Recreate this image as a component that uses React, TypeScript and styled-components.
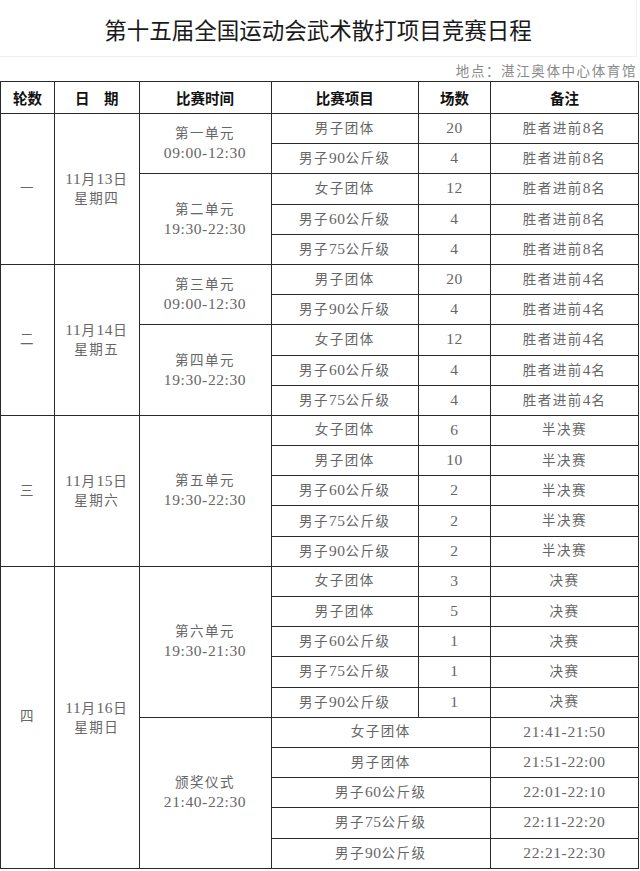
import React from "react";
import styled, { createGlobalStyle } from "styled-components";

const Global = createGlobalStyle`
  html, body { margin: 0; padding: 0; background: #fff; }
  body { width: 640px; }
`;

const Page = styled.div`
  width: 640px;
  background: #fff;
`;

const TitleBar = styled.div`
  height: 57px;
  display: flex;
  align-items: center;
  justify-content: center;
  border-bottom: 1px solid #f0f0f0;
  border-right: 1px solid #f0f0f0;
  box-sizing: border-box;
  width: 637px;
`;

const Title = styled.h1`
  margin: 0;
  padding-top: 2px;
  font-family: "Noto Sans CJK SC", "Noto Sans", sans-serif;
  font-weight: 400;
  font-size: 22.5px;
  color: #1a1a1a;
`;

const Venue = styled.div`
  height: 24px;
  display: flex;
  align-items: center;
  justify-content: flex-end;
  padding-right: 3px;
  padding-top: 2px;
  box-sizing: border-box;
  font-family: "Liberation Serif", "Noto Sans CJK SC", serif;
  font-size: 13.5px;
  letter-spacing: 1.6px;
  color: #8a8a8a;
`;

const Table = styled.table`
  width: 638px;
  border-collapse: collapse;
  table-layout: fixed;
  border: 1.5px solid #3a3a3a;
`;

const HeadRow = styled.tr`
  height: 32px;
`;

const Row = styled.tr`
  height: 30.2px;
`;

const Th = styled.th`
  border: 1.5px solid #2a2a2a;
  padding: 0;
  font-family: "Noto Sans CJK SC", sans-serif;
  font-weight: 700;
  font-size: 14.5px;
  color: #111;
  text-align: center;
  vertical-align: middle;
`;

const Td = styled.td<{ $block?: boolean }>`
  border: 1.5px solid #2a2a2a;
  padding: 0;
  font-family: "Liberation Serif", "Noto Sans CJK SC", serif;
  font-size: 13.5px;
  letter-spacing: 1.5px;
  line-height: ${(p) => (p.$block ? "19px" : "18px")};
  color: #666;
  text-align: center;
  vertical-align: middle;
  white-space: nowrap;
`;

const Num = styled.span`
  font-family: "Liberation Serif", serif;
  font-size: 15.5px;
  letter-spacing: 0.6px;
`;

function Txt({ children }: { children: string }) {
  const parts = children.split(/([0-9:\-]+)/).filter((p) => p.length > 0);
  return (
    <>
      {parts.map((p, i) =>
        /^[0-9:\-]+$/.test(p) ? <Num key={i}>{p}</Num> : <React.Fragment key={i}>{p}</React.Fragment>
      )}
    </>
  );
}

type Item = { name: string; count?: string; note: string };
type Session = { label: string; time: string; items: Item[]; merged?: boolean };
type Day = { round: string; date: string; weekday: string; sessions: Session[] };

const days: Day[] = [
  {
    round: "一",
    date: "11月13日",
    weekday: "星期四",
    sessions: [
      {
        label: "第一单元",
        time: "09:00-12:30",
        items: [
          { name: "男子团体", count: "20", note: "胜者进前8名" },
          { name: "男子90公斤级", count: "4", note: "胜者进前8名" },
        ],
      },
      {
        label: "第二单元",
        time: "19:30-22:30",
        items: [
          { name: "女子团体", count: "12", note: "胜者进前8名" },
          { name: "男子60公斤级", count: "4", note: "胜者进前8名" },
          { name: "男子75公斤级", count: "4", note: "胜者进前8名" },
        ],
      },
    ],
  },
  {
    round: "二",
    date: "11月14日",
    weekday: "星期五",
    sessions: [
      {
        label: "第三单元",
        time: "09:00-12:30",
        items: [
          { name: "男子团体", count: "20", note: "胜者进前4名" },
          { name: "男子90公斤级", count: "4", note: "胜者进前4名" },
        ],
      },
      {
        label: "第四单元",
        time: "19:30-22:30",
        items: [
          { name: "女子团体", count: "12", note: "胜者进前4名" },
          { name: "男子60公斤级", count: "4", note: "胜者进前4名" },
          { name: "男子75公斤级", count: "4", note: "胜者进前4名" },
        ],
      },
    ],
  },
  {
    round: "三",
    date: "11月15日",
    weekday: "星期六",
    sessions: [
      {
        label: "第五单元",
        time: "19:30-22:30",
        items: [
          { name: "女子团体", count: "6", note: "半决赛" },
          { name: "男子团体", count: "10", note: "半决赛" },
          { name: "男子60公斤级", count: "2", note: "半决赛" },
          { name: "男子75公斤级", count: "2", note: "半决赛" },
          { name: "男子90公斤级", count: "2", note: "半决赛" },
        ],
      },
    ],
  },
  {
    round: "四",
    date: "11月16日",
    weekday: "星期日",
    sessions: [
      {
        label: "第六单元",
        time: "19:30-21:30",
        items: [
          { name: "女子团体", count: "3", note: "决赛" },
          { name: "男子团体", count: "5", note: "决赛" },
          { name: "男子60公斤级", count: "1", note: "决赛" },
          { name: "男子75公斤级", count: "1", note: "决赛" },
          { name: "男子90公斤级", count: "1", note: "决赛" },
        ],
      },
      {
        label: "颁奖仪式",
        time: "21:40-22:30",
        merged: true,
        items: [
          { name: "女子团体", note: "21:41-21:50" },
          { name: "男子团体", note: "21:51-22:00" },
          { name: "男子60公斤级", note: "22:01-22:10" },
          { name: "男子75公斤级", note: "22:11-22:20" },
          { name: "男子90公斤级", note: "22:21-22:30" },
        ],
      },
    ],
  },
];

const cols = [54, 84.5, 132, 147.5, 72, 148];

export default function App() {
  const rows: React.ReactNode[] = [];
  days.forEach((day, di) => {
    const total = day.sessions.reduce((n, s) => n + s.items.length, 0);
    day.sessions.forEach((s, si) => {
      s.items.forEach((it, ii) => {
        const first = si === 0 && ii === 0;
        rows.push(
          <Row key={`${di}-${si}-${ii}`}>
            {first && <Td rowSpan={total}>{day.round}</Td>}
            {first && (
              <Td rowSpan={total} $block>
                <Txt>{day.date}</Txt>
                <br />
                {day.weekday}
              </Td>
            )}
            {ii === 0 && (
              <Td rowSpan={s.items.length} $block>
                {s.label}
                <br />
                <Txt>{s.time}</Txt>
              </Td>
            )}
            {s.merged ? (
              <Td colSpan={2}>
                <Txt>{it.name}</Txt>
              </Td>
            ) : (
              <>
                <Td>
                  <Txt>{it.name}</Txt>
                </Td>
                <Td>
                  <Txt>{it.count ?? ""}</Txt>
                </Td>
              </>
            )}
            <Td>
              <Txt>{it.note}</Txt>
            </Td>
          </Row>
        );
      });
    });
  });

  return (
    <Page>
      <Global />
      <TitleBar>
        <Title>第十五届全国运动会武术散打项目竞赛日程</Title>
      </TitleBar>
      <Venue>地点：湛江奥体中心体育馆</Venue>
      <Table>
        <colgroup>
          {cols.map((w, i) => (
            <col key={i} style={{ width: w }} />
          ))}
        </colgroup>
        <thead>
          <HeadRow>
            <Th>轮数</Th>
            <Th>日　期</Th>
            <Th>比赛时间</Th>
            <Th>比赛项目</Th>
            <Th>场数</Th>
            <Th>备注</Th>
          </HeadRow>
        </thead>
        <tbody>{rows}</tbody>
      </Table>
    </Page>
  );
}
